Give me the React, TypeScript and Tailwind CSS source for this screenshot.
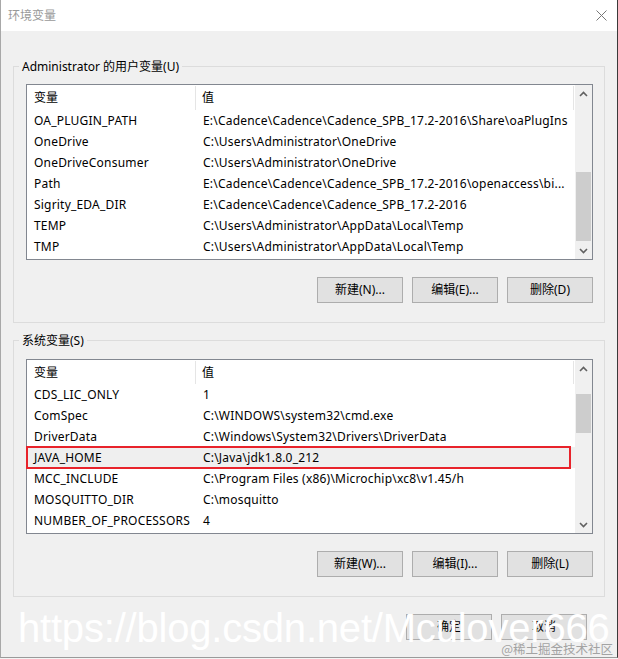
import React from 'react';

const userVars: [string, string][] = [
  ['OA_PLUGIN_PATH', 'E:\\Cadence\\Cadence\\Cadence_SPB_17.2-2016\\Share\\oaPlugIns'],
  ['OneDrive', 'C:\\Users\\Administrator\\OneDrive'],
  ['OneDriveConsumer', 'C:\\Users\\Administrator\\OneDrive'],
  ['Path', 'E:\\Cadence\\Cadence\\Cadence_SPB_17.2-2016\\openaccess\\bi...'],
  ['Sigrity_EDA_DIR', 'E:\\Cadence\\Cadence\\Cadence_SPB_17.2-2016'],
  ['TEMP', 'C:\\Users\\Administrator\\AppData\\Local\\Temp'],
  ['TMP', 'C:\\Users\\Administrator\\AppData\\Local\\Temp'],
];

const sysVars: [string, string][] = [
  ['CDS_LIC_ONLY', '1'],
  ['ComSpec', 'C:\\WINDOWS\\system32\\cmd.exe'],
  ['DriverData', 'C:\\Windows\\System32\\Drivers\\DriverData'],
  ['JAVA_HOME', 'C:\\Java\\jdk1.8.0_212'],
  ['MCC_INCLUDE', 'C:\\Program Files (x86)\\Microchip\\xc8\\v1.45/h'],
  ['MOSQUITTO_DIR', 'C:\\mosquitto'],
  ['NUMBER_OF_PROCESSORS', '4'],
];

function Chevron({ down }: { down?: boolean }) {
  return (
    <svg width="9" height="6" viewBox="0 0 9 6" className={down ? 'rotate-180' : ''}>
      <polyline points="1,5 4.5,1.5 8,5" fill="none" stroke="#606060" strokeWidth="1.6" />
    </svg>
  );
}

function Scrollbar({ thumb }: { thumb: string }) {
  return (
    <div className="w-[17px] flex flex-col bg-[#f0f0f0]">
      <div className="h-[17px] flex items-center justify-center">
        <Chevron />
      </div>
      <div className="flex-1 px-[1px]">
        <div className={`bg-[#cdcdcd] ${thumb}`} />
      </div>
      <div className="h-[17px] flex items-center justify-center">
        <Chevron down />
      </div>
    </div>
  );
}

function VarList({ rows, height, header, thumb, marked }: { rows: [string, string][]; height: string; header: string; thumb: string; marked?: string }) {
  return (
    <div className={`flex border border-[#828790] bg-white ${height}`}>
      <div className="flex-1">
        <div className={`flex pt-[1px] ${header}`}>
          <div className="w-[169px] h-full pl-[7px] flex items-center border-r border-[#e5e5e5]">变量</div>
          <div className="flex-1 h-full pl-[6px] flex items-center border-r border-[#e5e5e5] mr-[1px]">值</div>
        </div>
        {rows.map(([name, value]) => (
          <div
            key={name}
            className={`relative flex h-[21px] pt-[1px] leading-[20px] whitespace-nowrap tracking-[0.2px] ${marked === name ? 'bg-[#efefef]' : ''}`}
          >
            <div className="w-[169px] pl-[7px]">{name}</div>
            <div className="flex-1 pl-[7px]">{value}</div>
            {marked === name && (
              <div className="absolute -left-[1px] -top-[1px] -bottom-[1px] right-[4px] border-2 border-[#e8232b]" />
            )}
          </div>
        ))}
      </div>
      <Scrollbar thumb={thumb} />
    </div>
  );
}

function Btn({ children }: { children: React.ReactNode }) {
  return (
    <div className="w-[86px] h-[26px] flex items-center justify-center bg-[#e1e1e1] border border-[#adadad]">
      {children}
    </div>
  );
}

export default function App() {
  return (
    <div
      className="relative w-[618px] h-[659px] bg-[#f4f4f4] text-[12px] text-black"
      style={{ fontFamily: '"Noto Sans", "Noto Sans CJK SC", sans-serif' }}
    >
      <div className="h-[658px] flex flex-col border-l border-r border-b border-l-[#a8a8a8] border-r-[#3a3a3a] border-b-[#9a9a9a]">
        <div className="h-[31px] bg-white flex items-center justify-between pl-[7px] pr-[10px]">
          <span className="text-[#999999]">环境变量</span>
          <svg width="11" height="11" viewBox="0 0 11 11">
            <path d="M0.5 0.5 L10.5 10.5 M10.5 0.5 L0.5 10.5" stroke="#777777" strokeWidth="1" />
          </svg>
        </div>

        <div className="flex-1 bg-[#f0f0f0] pt-[27px] flex flex-col">
          <fieldset className="mx-[12px] border border-[#dcdcdc] pl-[12px] pr-[11px] pb-[19px]">
            <legend className="-ml-[7px] px-[3px] leading-[17px]">Administrator 的用户变量(U)</legend>
            <div className="mt-[9px]">
              <VarList rows={userVars} height="h-[176px]" header="h-[25px]" thumb="mt-[70px] h-[69px]" />
            </div>
            <div className="mt-[17px] flex justify-end gap-[9px]">
              <Btn>新建(N)...</Btn>
              <Btn>编辑(E)...</Btn>
              <Btn>删除(D)</Btn>
            </div>
          </fieldset>

          <fieldset className="mt-[9px] mx-[12px] border border-[#dcdcdc] pl-[12px] pr-[11px] pb-[19px]">
            <legend className="-ml-[7px] px-[3px] leading-[17px]">系统变量(S)</legend>
            <div className="mt-[10px]">
              <VarList rows={sysVars} height="h-[175px]" header="h-[24px]" thumb="mt-[17px] h-[39px]" marked="JAVA_HOME" />
            </div>
            <div className="mt-[17px] flex justify-end gap-[9px]">
              <Btn>新建(W)...</Btn>
              <Btn>编辑(I)...</Btn>
              <Btn>删除(L)</Btn>
            </div>
          </fieldset>

          <div className="mt-[17px] flex justify-end gap-[9px] pr-[30px]">
            <Btn>确定</Btn>
            <Btn>取消</Btn>
          </div>
        </div>
      </div>

      <div
        className="absolute left-[18px] top-[608px] text-[40px] leading-[40px] text-white whitespace-nowrap tracking-[-0.2px]"
        style={{ fontFamily: '"Liberation Sans", Arial, sans-serif' }}
      >
        https://blog.csdn.net/Mculover666
      </div>
      <div
        className="absolute right-[5px] top-[640px] text-[12.5px] leading-[18px] text-[#a3a3a3] whitespace-nowrap"
        style={{ fontFamily: '"Noto Sans CJK SC", sans-serif' }}
      >
        @稀土掘金技术社区
      </div>
    </div>
  );
}
